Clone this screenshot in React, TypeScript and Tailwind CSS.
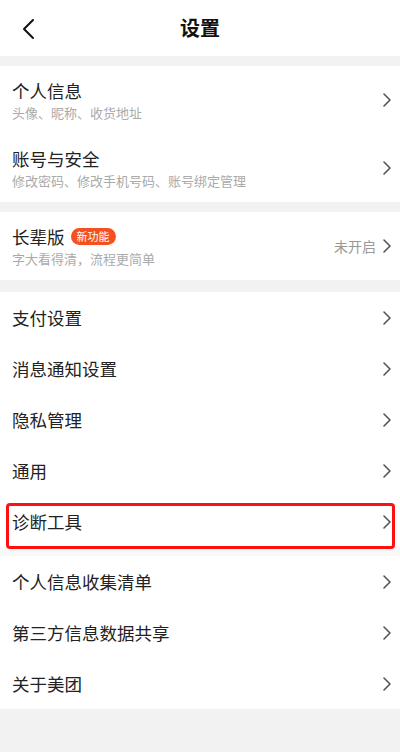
import React from 'react';

const Chevron = () => (
  <svg width="10" height="16" viewBox="0 0 10 16" fill="none" className="shrink-0">
    <path d="M2 2l6 6-6 6" stroke="#555" strokeWidth="1.6" strokeLinecap="round" strokeLinejoin="round" />
  </svg>
);

const Band = ({ h }: { h: string }) => <div className={`${h} bg-[#f2f2f2]`} />;

const DoubleRow = ({ title, sub, extra, badge }: { title: string; sub: string; extra?: string; badge?: boolean }) => (
  <div className="flex items-center justify-between pl-[12px] pr-[8px] h-[68px] bg-white">
    <div className="flex flex-col">
      <div className="flex items-center gap-[6px]">
        <span className="text-[17.5px] leading-[22px] text-[#222]">{title}</span>
        {badge && (
          <span className="rounded-full bg-[#f4511e] text-white text-[11px] leading-[17px] px-[6px]">新功能</span>
        )}
      </div>
      <span className="text-[13px] leading-[16px] text-[#aaa] mt-[3px]">{sub}</span>
    </div>
    <div className="flex items-center gap-[6px]">
      {extra && <span className="text-[14px] text-[#999]">{extra}</span>}
      <Chevron />
    </div>
  </div>
);

const Row = ({ title, boxed }: { title: string; boxed?: boolean }) => (
  <div className="relative flex items-center justify-between pl-[12px] pr-[8px] h-[51px] bg-white">
    <span className="text-[17.5px] text-[#222] mt-[2px]">{title}</span>
    <Chevron />
    {boxed && (
      <div className="absolute left-[6px] right-[5px] top-[7px] bottom-[-2px] border-[3px] border-[#ff1010] rounded-[4px]" />
    )}
  </div>
);

export default function App() {
  return (
    <div
      className="w-[400px] h-[752px] bg-[#f2f2f2] flex flex-col overflow-hidden"
      style={{ fontFamily: '"Noto Sans CJK SC", "Noto Sans", sans-serif' }}
    >
      <div className="relative h-[56px] bg-white flex items-center justify-center">
        <svg width="14" height="22" viewBox="0 0 14 22" fill="none" className="absolute left-[22px] top-[18px]">
          <path d="M11 2L2 11l9 9" stroke="#111" strokeWidth="2" strokeLinecap="round" strokeLinejoin="round" />
        </svg>
        <span className="text-[20px] font-bold text-[#111]">设置</span>
      </div>
      <Band h="h-[10px]" />
      <DoubleRow title="个人信息" sub="头像、昵称、收货地址" />
      <DoubleRow title="账号与安全" sub="修改密码、修改手机号码、账号绑定管理" />
      <Band h="h-[10px]" />
      <DoubleRow title="长辈版" sub="字大看得清，流程更简单" extra="未开启" badge />
      <Band h="h-[12px]" />
      <Row title="支付设置" />
      <Row title="消息通知设置" />
      <Row title="隐私管理" />
      <Row title="通用" />
      <Row title="诊断工具" boxed />
      <div className="h-[9px] bg-[#f8f8f8]" />
      <Row title="个人信息收集清单" />
      <Row title="第三方信息数据共享" />
      <Row title="关于美团" />
    </div>
  );
}
